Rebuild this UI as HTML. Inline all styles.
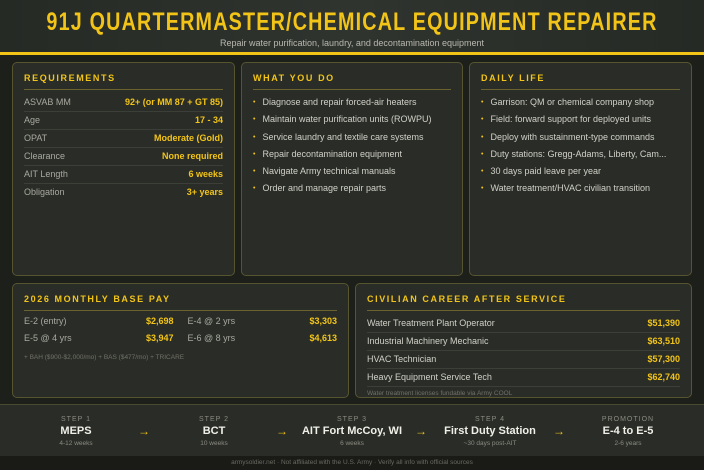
<!DOCTYPE html>
<html><head><meta charset="utf-8"><style>
*{margin:0;padding:0;box-sizing:border-box}
body{width:704px;height:470px;background:#1d1f1a;font-family:"Liberation Sans",sans-serif;color:#d8d8d0;position:relative;overflow:hidden}
.hdr{position:absolute;left:0;top:0;width:704px;height:52px;background:linear-gradient(90deg,#262a25,#30342f,#262a25)}
.title{position:absolute;top:8px;left:352px;transform:translateX(-50%) scaleX(.79);color:#f2c418;font-weight:bold;font-size:25px;letter-spacing:1.5px;white-space:nowrap}
.sub{position:absolute;top:38px;width:704px;text-align:center;font-size:9px;color:#b8b8b0}
.bar{position:absolute;top:52px;left:0;width:704px;height:3px;background:#f2c418}
.card{position:absolute;background:#2a2d27;border:1px solid #57552f;border-radius:5px;padding:10px 11px}
.h{color:#f2c418;font-weight:bold;font-size:9px;letter-spacing:1.6px;padding-bottom:6px;border-bottom:1px solid #6a6330;margin-bottom:4px}
.row{display:flex;justify-content:space-between;font-size:9px;height:18px;line-height:17px;border-bottom:1px solid #3c3f38}
.row .l{color:#a8a8a0}.row .v{color:#f2c418;font-weight:bold}
.li{font-size:9px;height:17.3px;line-height:17px;color:#d0d0c8;white-space:nowrap;overflow:hidden}
.li:before{content:"•";color:#f2c418;font-size:7px;margin-right:7px;position:relative;top:-1px}
.note{font-size:6.5px;color:#707068;margin-top:4px}
.steps{position:absolute;top:404px;left:0;width:704px;height:52px;background:#2a2d27;border-top:1px solid #4a4a30}
.st{position:absolute;top:11px;width:120px;text-align:center}
.st .a{font-size:7px;color:#8a8a82;letter-spacing:1px}
.st .b{font-size:11px;color:#f0f0e8;font-weight:bold;margin-top:2px}
.st .c{font-size:6.5px;color:#8a8a82;margin-top:3px}
.ar{position:absolute;top:19px;color:#f2c418;font-size:12px;font-weight:bold}
.foot{position:absolute;top:456px;left:0;width:704px;height:14px;background:#1a1b17;text-align:center;font-size:6.5px;color:#6a6a62;line-height:14px}
</style></head><body>
<div class="hdr"></div>
<div class="title">91J QUARTERMASTER/CHEMICAL EQUIPMENT REPAIRER</div>
<div class="sub">Repair water purification, laundry, and decontamination equipment</div>
<div class="bar"></div>

<div class="card" style="left:12px;top:62px;width:223px;height:214px">
<div class="h">REQUIREMENTS</div>
<div class="row"><span class="l">ASVAB MM</span><span class="v">92+ (or MM 87 + GT 85)</span></div>
<div class="row"><span class="l">Age</span><span class="v">17 - 34</span></div>
<div class="row"><span class="l">OPAT</span><span class="v">Moderate (Gold)</span></div>
<div class="row"><span class="l">Clearance</span><span class="v">None required</span></div>
<div class="row"><span class="l">AIT Length</span><span class="v">6 weeks</span></div>
<div class="row" style="border:none"><span class="l">Obligation</span><span class="v">3+ years</span></div>
</div>

<div class="card" style="left:241px;top:62px;width:222px;height:214px">
<div class="h">WHAT YOU DO</div>
<div class="li">Diagnose and repair forced-air heaters</div>
<div class="li">Maintain water purification units (ROWPU)</div>
<div class="li">Service laundry and textile care systems</div>
<div class="li">Repair decontamination equipment</div>
<div class="li">Navigate Army technical manuals</div>
<div class="li">Order and manage repair parts</div>
</div>

<div class="card" style="left:469px;top:62px;width:223px;height:214px">
<div class="h">DAILY LIFE</div>
<div class="li">Garrison: QM or chemical company shop</div>
<div class="li">Field: forward support for deployed units</div>
<div class="li">Deploy with sustainment-type commands</div>
<div class="li">Duty stations: Gregg-Adams, Liberty, Cam...</div>
<div class="li">30 days paid leave per year</div>
<div class="li">Water treatment/HVAC civilian transition</div>
</div>

<div class="card" style="left:12px;top:283px;width:337px;height:115px">
<div class="h">2026 MONTHLY BASE PAY</div>
<div style="display:flex;gap:14px;font-size:9px;margin-top:5px">
<div style="flex:1"><div style="display:flex;justify-content:space-between;height:17px"><span style="color:#a8a8a0">E-2 (entry)</span><b style="color:#f2c418">$2,698</b></div>
<div style="display:flex;justify-content:space-between;height:17px"><span style="color:#a8a8a0">E-5 @ 4 yrs</span><b style="color:#f2c418">$3,947</b></div></div>
<div style="flex:1"><div style="display:flex;justify-content:space-between;height:17px"><span style="color:#a8a8a0">E-4 @ 2 yrs</span><b style="color:#f2c418">$3,303</b></div>
<div style="display:flex;justify-content:space-between;height:17px"><span style="color:#a8a8a0">E-6 @ 8 yrs</span><b style="color:#f2c418">$4,613</b></div></div>
</div>
<div class="note">+ BAH ($900-$2,000/mo) + BAS ($477/mo) + TRICARE</div>
</div>

<div class="card" style="left:355px;top:283px;width:337px;height:115px">
<div class="h">CIVILIAN CAREER AFTER SERVICE</div>
<div class="row"><span style="color:#d0d0c8">Water Treatment Plant Operator</span><span class="v">$51,390</span></div>
<div class="row"><span style="color:#d0d0c8">Industrial Machinery Mechanic</span><span class="v">$63,510</span></div>
<div class="row"><span style="color:#d0d0c8">HVAC Technician</span><span class="v">$57,300</span></div>
<div class="row"><span style="color:#d0d0c8">Heavy Equipment Service Tech</span><span class="v">$62,740</span></div>
<div class="note" style="margin-top:3px">Water treatment licenses fundable via Army COOL</div>
</div>

<div class="steps">
<div class="st" style="left:16px"><div class="a">STEP 1</div><div class="b">MEPS</div><div class="c">4-12 weeks</div></div>
<div class="ar" style="left:138px">→</div>
<div class="st" style="left:154px"><div class="a">STEP 2</div><div class="b">BCT</div><div class="c">10 weeks</div></div>
<div class="ar" style="left:276px">→</div>
<div class="st" style="left:292px"><div class="a">STEP 3</div><div class="b">AIT Fort McCoy, WI</div><div class="c">6 weeks</div></div>
<div class="ar" style="left:415px">→</div>
<div class="st" style="left:430px"><div class="a">STEP 4</div><div class="b">First Duty Station</div><div class="c">~30 days post-AIT</div></div>
<div class="ar" style="left:553px">→</div>
<div class="st" style="left:568px"><div class="a">PROMOTION</div><div class="b">E-4 to E-5</div><div class="c">2-6 years</div></div>
</div>
<div class="foot">armysoldier.net · Not affiliated with the U.S. Army · Verify all info with official sources</div>
</body></html>
